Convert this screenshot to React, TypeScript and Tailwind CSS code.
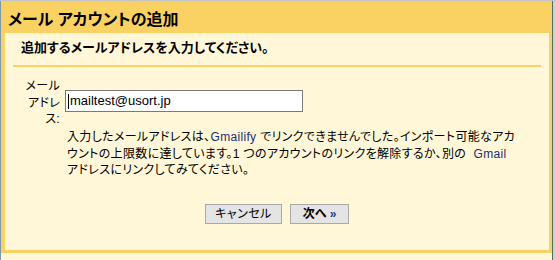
import React from "react";

const jp = {
  fontFamily: '"Liberation Sans", "Noto Sans CJK JP", sans-serif',
  fontFeatureSettings: '"palt"',
} as React.CSSProperties;

export default function App() {
  return (
    <div className="w-[555px] h-[260px] overflow-hidden flex flex-col bg-[#d0d0d0] text-black" style={jp}>
      <div className="h-px bg-[#c4c4c4]" />
      <div className="flex flex-1">
        <div className="w-px bg-[#7f97a8]" />
        <div className="w-[551px] flex flex-col bg-[#fad163]">
          <div className="h-[32px] pl-[7px] pt-[9px] text-[16px] leading-[20px] font-semibold whitespace-nowrap">
            メール アカウントの追加
          </div>
          <div className="ml-[4px] mr-[3px] h-[217px] bg-[#fff7d7] flex flex-col">
            <div className="pl-[16px] pt-[7px] text-[13px] leading-[16px] font-bold whitespace-nowrap">
              追加するメールアドレスを入力してください。
            </div>
            <div className="mx-[8px] mt-[9px] h-[2px] bg-[#fad163]" />
            <div className="flex mt-[11px]">
              <div className="w-[56px] pr-[1px] text-right text-[12px] leading-[16.5px] whitespace-nowrap tracking-[0.3px]">
                メール
                <br />
                アドレ
                <br />
                ス:
              </div>
              <div className="ml-[4px] flex flex-col">
                <div className="mt-[12px] w-[238px] h-[22px] border border-[#7a7a7a] bg-white flex items-center pl-[2px] text-[13px]">
                  <span className="w-px h-[15px] bg-black" />
                  <span className="ml-px">mailtest@usort.jp</span>
                </div>
                <div className="mt-[17px] pl-[2px] text-[12px] leading-[16.5px] whitespace-nowrap tracking-[0.33px]">
                  入力したメールアドレスは、<span className="text-[#1a2f72]">Gmailify</span> でリンクできませんでした。インポート可能なアカ
                  <br />
                  ウントの上限数に達しています。1 つのアカウントのリンクを解除するか、別の&nbsp; <span className="text-[#1a2f72]">Gmail</span>
                  <br />
                  アドレスにリンクしてみてください。
                </div>
                <div className="flex gap-[8px] mt-[25px] ml-[140px]">
                  <button className="w-[77px] h-[20px] bg-[#e4e4e4] border border-[#a9a9a9] text-[12px] leading-[18px] tracking-[0.5px]">
                    キャンセル
                  </button>
                  <button className="w-[59px] h-[20px] bg-[#e4e4e4] border border-[#a9a9a9] text-[12px] leading-[18px] font-bold">
                    次へ <span className="text-[#1a3f9a]">»</span>
                  </button>
                </div>
              </div>
            </div>
          </div>
          <div className="h-[3px]" />
          <div className="flex-1 bg-[#fff7d7]" />
        </div>
        <div className="w-px bg-[#5c6c5c]" />
        <div className="flex-1 bg-[#cfcfcf]" />
      </div>
    </div>
  );
}
